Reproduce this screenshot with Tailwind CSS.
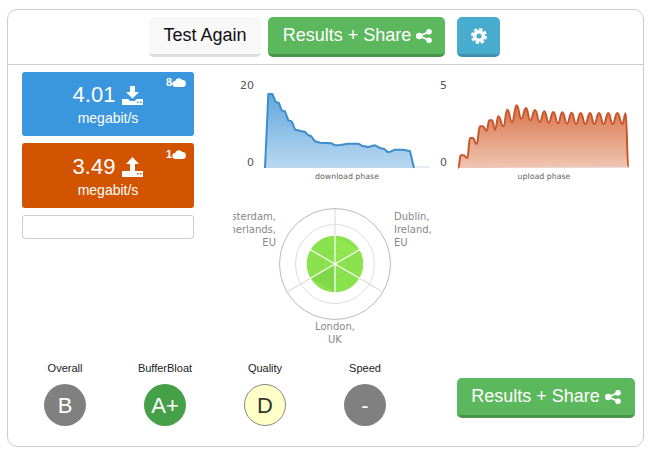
<!DOCTYPE html>
<html lang="en">
<head>
  <meta charset="UTF-8">
  <title>Results</title>
  <script src="https://cdn.jsdelivr.net/npm/@tailwindcss/browser@4"></script>
</head>
<body class="bg-white font-['Liberation_Sans',Arial,sans-serif] text-[#222]">
  <main class="ml-[7px] mt-[9px] w-[637px] h-[438px] border border-[#ccc] rounded-[10px] flex flex-col">

    <!-- top buttons -->
    <header class="h-[55px] shrink-0 border-b border-[#ccc] pt-[7px] flex items-start pl-[141px]">
      <button class="w-[112px] h-[40px] bg-[#f8f8f8] rounded-[5px] border-b-[3px] border-[#ddd] text-[18px] text-[#111]">Test Again</button>
      <button class="ml-[7px] w-[177px] h-[40px] pl-[2px] bg-[#5cb85c] rounded-[5px] border-b-[3px] border-[#4a934a] text-[18px] text-white flex items-center justify-center gap-[5px]">
        Results + Share
        <svg class="w-[16px] h-[14px]" viewBox="0 0 16 14" fill="white"><circle cx="3.200" cy="7" r="3.200"/><circle cx="13" cy="2.800" r="2.800"/><circle cx="13" cy="11.200" r="2.800"/><path d="M3.200 7 13 2.800M3.200 7 13 11.200" stroke="white" stroke-width="1.800"/></svg>
      </button>
      <button class="ml-[12px] w-[43px] h-[40px] bg-[#48acce] rounded-[5px] border-b-[3px] border-[#3f8fae] flex items-center justify-center">
        <svg class="w-[16px] h-[16px]" viewBox="0 0 16 16" fill="none" stroke="white"><circle cx="8" cy="8" r="4.300" stroke-width="3.400"/><circle cx="8" cy="8" r="6.800" stroke-width="2.400" stroke-dasharray="3.340 2"/></svg>
      </button>
    </header>

    <div class="flex flex-1">
      <!-- speed boxes -->
      <aside class="w-[172px] ml-[14px] pt-[7px] shrink-0 flex flex-col gap-[7px]">
        <div class="relative h-[64px] bg-[#3a96dd] rounded-[3px] text-white text-center pt-[9px]">
          <span class="absolute right-[8px] top-[3px] flex items-center text-[11px] font-bold leading-[14px]">8
            <svg class="w-[14px] h-[10px]" viewBox="0 0 13 10" fill="white"><path d="M3 10a3 3 0 0 1-.4-6A4 4 0 0 1 9.800 3 3.500 3.500 0 0 1 10 10z"/></svg>
          </span>
          <div class="flex items-center justify-center gap-[7px] text-[22px] leading-[28px]">4.01
            <svg class="w-[21px] h-[19px]" viewBox="0 0 21 19" fill="white"><path d="M8 0h5v6h4l-6.500 6.500L4 6h4z"/><path fill-rule="evenodd" d="M0 13h6l2.500 2h4L15 13h6v6H0zM15 15.500v1.500h1.500v-1.500zM18 15.500v1.500h1.500v-1.500z"/></svg>
          </div>
          <div class="text-[14px] leading-[18px]">megabit/s</div>
        </div>
        <div class="relative h-[65px] bg-[#d35400] rounded-[3px] text-white text-center pt-[10px]">
          <span class="absolute right-[8px] top-[4px] flex items-center text-[11px] font-bold leading-[14px]">1
            <svg class="w-[14px] h-[10px]" viewBox="0 0 13 10" fill="white"><path d="M3 10a3 3 0 0 1-.4-6A4 4 0 0 1 9.800 3 3.500 3.500 0 0 1 10 10z"/></svg>
          </span>
          <div class="flex items-center justify-center gap-[7px] text-[22px] leading-[28px]">3.49
            <svg class="w-[21px] h-[20px]" viewBox="0 0 21 20" fill="white"><path d="M10.500 0 17 7h-4v7H8V7H4z"/><path fill-rule="evenodd" d="M0 14h21v6H0zM15 16v1.500h1.500V16zM18 16v1.500h1.500V16z"/></svg>
          </div>
          <div class="text-[14px] leading-[18px]">megabit/s</div>
        </div>
        <div class="h-[24px] border border-[#ccc] rounded-[3px]"></div>
      </aside>

      <!-- charts and radar -->
      <section class="w-[411px] ml-[38px] pt-[7px] shrink-0">
        <div class="flex">
          <svg id="downChart" class="w-[205px] h-[113px] shrink-0" viewBox="0 0 615 339"></svg>
          <svg id="upChart" class="w-[205px] h-[113px] shrink-0" viewBox="0 0 615 339"></svg>
        </div>
        <svg class="block w-[210px] h-[150px] mt-[10px] ml-[1px]" viewBox="233 195 210 150" font-family="DejaVu Sans" font-size="10" fill="#888">
          <g fill="none">
            <circle cx="335" cy="264" r="55.500" stroke="#bbb"/>
            <circle cx="335" cy="264" r="39.500" stroke="#ddd"/>
            <path d="M335 264V209M335 264 383 292M335 264 287 292" stroke="#ddd" stroke-width="1.200"/>
          </g>
          <circle cx="335" cy="264" r="28.300" fill="#8ae24e"/>
          <path d="M335 264V236.500L359.500 250.500 335 264" fill="#93e64f"/>
          <path d="M335 264 311 278 335 292z" fill="#7fd84c"/>
          <circle cx="335" cy="264" r="13.500" fill="none" stroke="#000" stroke-opacity=".06"/>
          <path d="M335 235V293M310 249.500 360 278.500M360 249.500 310 278.500" stroke="#fff" stroke-width="1.200" fill="none"/>
          <text text-anchor="end"><tspan x="276" y="220">Amsterdam,</tspan><tspan x="276" y="233">Netherlands,</tspan><tspan x="276" y="246">EU</tspan></text>
          <text><tspan x="394" y="220">Dublin,</tspan><tspan x="394" y="233">Ireland,</tspan><tspan x="394" y="246">EU</tspan></text>
          <text text-anchor="middle"><tspan x="335" y="330">London,</tspan><tspan x="335" y="343">UK</tspan></text>
        </svg>
      </section>
    </div>

    <!-- grades -->
    <footer class="h-[85px] shrink-0 flex pl-[7px]">
      <div class="w-[100px] flex flex-col items-center">
        <div class="text-[11px] leading-[14px]">Overall</div>
        <div class="mt-[9px] w-[42px] h-[42px] rounded-full bg-[#808080] text-white text-[22px] flex items-center justify-center">B</div>
      </div>
      <div class="w-[100px] flex flex-col items-center">
        <div class="text-[11px] leading-[14px]">BufferBloat</div>
        <div class="mt-[9px] w-[42px] h-[42px] rounded-full bg-[#46a047] text-white text-[22px] flex items-center justify-center">A+</div>
      </div>
      <div class="w-[100px] flex flex-col items-center">
        <div class="text-[11px] leading-[14px]">Quality</div>
        <div class="mt-[9px] w-[42px] h-[42px] rounded-full bg-[#ffffc8] border border-[#888] text-[#333] text-[22px] flex items-center justify-center">D</div>
      </div>
      <div class="w-[100px] flex flex-col items-center">
        <div class="text-[11px] leading-[14px]">Speed</div>
        <div class="mt-[9px] w-[42px] h-[42px] rounded-full bg-[#808080] text-white text-[22px] flex items-center justify-center">-</div>
      </div>
      <button class="ml-[42px] mt-[17px] w-[178px] h-[40px] bg-[#5cb85c] rounded-[5px] border-b-[3px] border-[#4a934a] text-[18px] text-white flex items-center justify-center gap-[5px]">
        Results + Share
        <svg class="w-[16px] h-[14px]" viewBox="0 0 16 14" fill="white"><circle cx="3.200" cy="7" r="3.200"/><circle cx="13" cy="2.800" r="2.800"/><circle cx="13" cy="11.200" r="2.800"/><path d="M3.200 7 13 2.800M3.200 7 13 11.200" stroke="white" stroke-width="1.800"/></svg>
      </button>
    </footer>
  </main>

  <script>
    const down = [[99,288],[109,66],[121,66],[131,90],[141,93],[149,115],[159,118],[169,145],[179,148],[189,173],[204,176],[219,180],[229,190],[237,192],[249,208],[264,212],[299,214],[309,220],[324,219],[349,215],[379,215],[389,221],[409,225],[429,220],[444,228],[457,231],[467,240],[475,239],[489,233],[514,233],[534,238],[546,288]];
    const up = [[64,288],[71,250],[79,250],[91,258],[99,198],[107,198],[119,216],[129,163],[137,163],[149,176],[157,145],[165,145],[174,173],[184,133],[199,163],[211,113],[225,150],[239,100],[253,140],[267,108],[280,145],[294,114],[308,150],[322,118],[335,152],[349,120],[363,154],[376,121],[390,155],[404,122],[417,156],[431,123],[445,156],[459,123],[472,156],[486,123],[500,156],[514,123],[527,156],[541,123],[556,156],[566,124],[574,286]];

    function linePath(pts) {
      return "M" + pts.map(p => p.join(" ")).join("L");
    }
    function smoothPath(pts) {
      let d = "M" + pts[0].join(" ");
      for (let i = 1; i < pts.length; i++) {
        const mid = (pts[i - 1][0] + pts[i][0]) / 2;
        d += `C${mid} ${pts[i - 1][1]} ${mid} ${pts[i][1]} ${pts[i][0]} ${pts[i][1]}`;
      }
      return d;
    }

    function drawChart(id, d, c) {
      document.getElementById(id).innerHTML = `
        <defs><linearGradient id="${id}G" x1="0" y1="0" x2="0" y2="1"><stop offset="0" stop-color="${c.top}"/><stop offset="1" stop-color="${c.bottom}"/></linearGradient></defs>
        <text x="${c.axisX}" y="51" font-family="DejaVu Sans" font-size="33" fill="#555" text-anchor="end">${c.max}</text>
        <text x="${c.axisX}" y="283" font-family="DejaVu Sans" font-size="33" fill="#555" text-anchor="end">0</text>
        <path d="M${c.baseStart} 285H${c.baseEnd}" stroke="#ccd6eb" stroke-width="3"/>
        <path d="${d}Z" fill="url(#${id}G)"/>
        <path d="${d}" fill="none" stroke="${c.line}" stroke-width="6" stroke-linejoin="round"/>
        <text x="${c.labelX}" y="321" font-family="DejaVu Sans" font-size="23.500" fill="#666" text-anchor="middle">${c.label}</text>`;
    }

    drawChart("downChart", linePath(down), { max: "20", axisX: 66, label: "download phase", labelX: 345, line: "#3b8ecb", top: "#63a8dd", bottom: "#bad8f0", baseStart: 99, baseEnd: 591 });
    drawChart("upChart", smoothPath(up), { max: "5", axisX: 30, label: "upload phase", labelX: 321, line: "#c9562a", top: "#d9744a", bottom: "#f0c6b3", baseStart: 64, baseEnd: 576 });
  </script>
</body>
</html>
